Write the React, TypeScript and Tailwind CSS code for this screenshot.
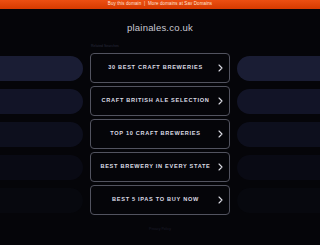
import React from 'react';

const links = [
  '30 Best Craft Breweries',
  'Craft British Ale Selection',
  'Top 10 Craft Breweries',
  'Best Brewery in Every State',
  'Best 5 IPAs to Buy Now',
];

// side pills fade out towards the bottom
const pillColors = ['bg-[#1a1d34]', 'bg-[#121427]', 'bg-[#0d0f1d]', 'bg-[#090a14]', 'bg-[#07080e]'];

const Chevron = () => (
  <svg width="5" height="8" viewBox="0 0 5 8" fill="none" className="shrink-0">
    <path d="M1 1 L4 4 L1 7" stroke="#dcdce4" strokeWidth="1.1" strokeLinecap="round" strokeLinejoin="round" />
  </svg>
);

export default function App() {
  return (
    <div
      className="w-[320px] h-[245px] overflow-hidden bg-[#050509] flex flex-col"
      style={{ fontFamily: '"Liberation Sans", Arial, sans-serif' }}
    >
      {/* Top bar */}
      <div className="h-[9px] shrink-0 bg-gradient-to-b from-[#ec4f12] to-[#d63a00] flex items-center justify-center">
        <span className="text-[4.5px] leading-none text-[#ffe6d8] tracking-[0.1px]">
          Buy this domain&nbsp;&nbsp;|&nbsp;&nbsp;More domains at Sav Domains
        </span>
      </div>

      {/* Domain */}
      <div className="h-[36px] shrink-0 flex items-start justify-center pt-[14px]">
        <h1 className="text-[9.5px] leading-none text-[#c9c9d3] tracking-[0.2px]">plainales.co.uk</h1>
      </div>

      {/* Label */}
      <div className="h-[7px] shrink-0 pl-[91px] flex items-start">
        <span className="text-[3.5px] leading-none text-[#2a2c3e]">Related Searches</span>
      </div>

      {/* Links with side pills */}
      <div className="flex gap-[7px] mt-[1px]">
        <div className="flex-1 flex flex-col gap-[3px]">
          {pillColors.map((c, i) => (
            <div key={i} className="h-[30px] flex items-center">
              <div className={`h-[25px] w-full rounded-r-[13px] ${c}`} />
            </div>
          ))}
        </div>

        <div className="w-[140px] shrink-0 flex flex-col gap-[3px]">
          {links.map((l) => (
            <div
              key={l}
              className="h-[30px] rounded-[4px] border border-[#52535f] flex items-center pl-[2px] pr-[6px]"
            >
              <span className="flex-1 text-center text-[5.6px] leading-none font-bold uppercase tracking-[0.7px] text-[#dcdce4]">
                {l}
              </span>
              <Chevron />
            </div>
          ))}
        </div>

        <div className="flex-1 flex flex-col gap-[3px]">
          {pillColors.map((c, i) => (
            <div key={i} className="h-[30px] flex items-center">
              <div className={`h-[25px] w-full rounded-l-[13px] ${c}`} />
            </div>
          ))}
        </div>
      </div>

      {/* Footer */}
      <div className="flex-1 flex items-center justify-center">
        <span className="text-[3.5px] leading-none text-[#1c1d2a]">Privacy Policy</span>
      </div>
    </div>
  );
}
